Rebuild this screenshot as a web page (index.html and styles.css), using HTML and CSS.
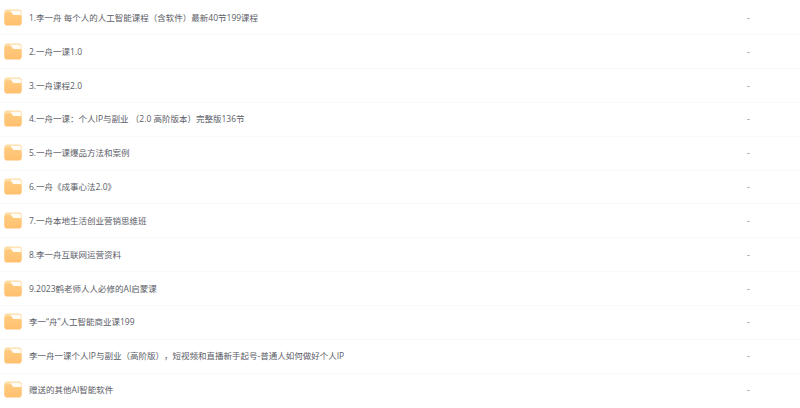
FILE: index.html
```html
<!DOCTYPE html>
<html lang="zh-CN">
<head>
    <meta charset="UTF-8">
    <meta name="viewport" content="width=device-width, initial-scale=1.0">
    <title>文件列表</title>
    <link rel="stylesheet" href="styles.css">
</head>
<body>

    <svg class="defs" width="0" height="0">
        <defs>
            <linearGradient id="front" x1="0" y1="0" x2="0" y2="1">
                <stop offset="0" stop-color="#ffcb80"/>
                <stop offset="1" stop-color="#ffc06e"/>
            </linearGradient>
            <symbol id="folder" viewBox="0 0 18 18">
                <rect x="0.3" y="0.6" width="17.4" height="15" rx="2.8" fill="#ffdca6"/>
                <path d="M6.4 1.7h8.6q1.8 0 1.8 1.6v3.4H9.6z" fill="#fffdf5"/>
                <path d="M0.4 5q0-1.8 1.8-1.8h4q.9 0 1.4.7l1.1 1.5q.4.6 1.2.6h5.9q1.8 0 1.8 1.8v5.9q0 2.8-2.8 2.8H3.2q-2.8 0-2.8-2.8z" fill="url(#front)"/>
            </symbol>
        </defs>
    </svg>

    <ul class="file-list">
        <li class="file">
            <svg class="icon"><use href="#folder"/></svg>
            <span class="name">1.李一舟 每个人的人工智能课程（含软件）最新40节199课程</span>
            <span class="size">-</span>
        </li>
        <li class="file">
            <svg class="icon"><use href="#folder"/></svg>
            <span class="name">2.一舟一课1.0</span>
            <span class="size">-</span>
        </li>
        <li class="file">
            <svg class="icon"><use href="#folder"/></svg>
            <span class="name">3.一舟课程2.0</span>
            <span class="size">-</span>
        </li>
        <li class="file">
            <svg class="icon"><use href="#folder"/></svg>
            <span class="name">4.一舟一课：个人IP与副业 （2.0 高阶版本）完整版136节</span>
            <span class="size">-</span>
        </li>
        <li class="file">
            <svg class="icon"><use href="#folder"/></svg>
            <span class="name">5.一舟一课爆品方法和案例</span>
            <span class="size">-</span>
        </li>
        <li class="file">
            <svg class="icon"><use href="#folder"/></svg>
            <span class="name">6.一舟《成事心法2.0》</span>
            <span class="size">-</span>
        </li>
        <li class="file">
            <svg class="icon"><use href="#folder"/></svg>
            <span class="name">7.一舟本地生活创业营销思维班</span>
            <span class="size">-</span>
        </li>
        <li class="file">
            <svg class="icon"><use href="#folder"/></svg>
            <span class="name">8.李一舟互联网运营资料</span>
            <span class="size">-</span>
        </li>
        <li class="file">
            <svg class="icon"><use href="#folder"/></svg>
            <span class="name">9.2023鹤老师人人必修的AI启蒙课</span>
            <span class="size">-</span>
        </li>
        <li class="file">
            <svg class="icon"><use href="#folder"/></svg>
            <span class="name">李一“舟”人工智能商业课199</span>
            <span class="size">-</span>
        </li>
        <li class="file">
            <svg class="icon"><use href="#folder"/></svg>
            <span class="name">李一舟一课个人IP与副业（高阶版），短视频和直播新手起号-普通人如何做好个人IP</span>
            <span class="size">-</span>
        </li>
        <li class="file">
            <svg class="icon"><use href="#folder"/></svg>
            <span class="name">赠送的其他AI智能软件</span>
            <span class="size">-</span>
        </li>
    </ul>

</body>
</html>
```
FILE: styles.css
```css
body {
    margin: 0;
    background-color: #fff;
    font-family: "Open Sans", "Noto Sans CJK SC", sans-serif;
    font-size: 8.5px;
    color: #5a5c66;
    text-spacing-trim: space-all;
    overflow: hidden;
}

.defs {
    display: block;
}

.file-list {
    list-style: none;
    margin: 0;
    padding: 1.5px 0 0;
}

.file {
    display: flex;
    align-items: center;
    box-sizing: border-box;
    height: 33.84px;
    padding-left: 4px;
    border-bottom: 1px solid #f9f9fa;
}

.file:last-child {
    border-bottom-color: transparent;
}

.icon {
    width: 18px;
    height: 18px;
    margin-right: 7px;
    flex-shrink: 0;
}

.name {
    flex: 1;
    line-height: 14px;
    white-space: nowrap;
}

.size {
    width: 53px;
    line-height: 14px;
    color: #777983;
}
```
